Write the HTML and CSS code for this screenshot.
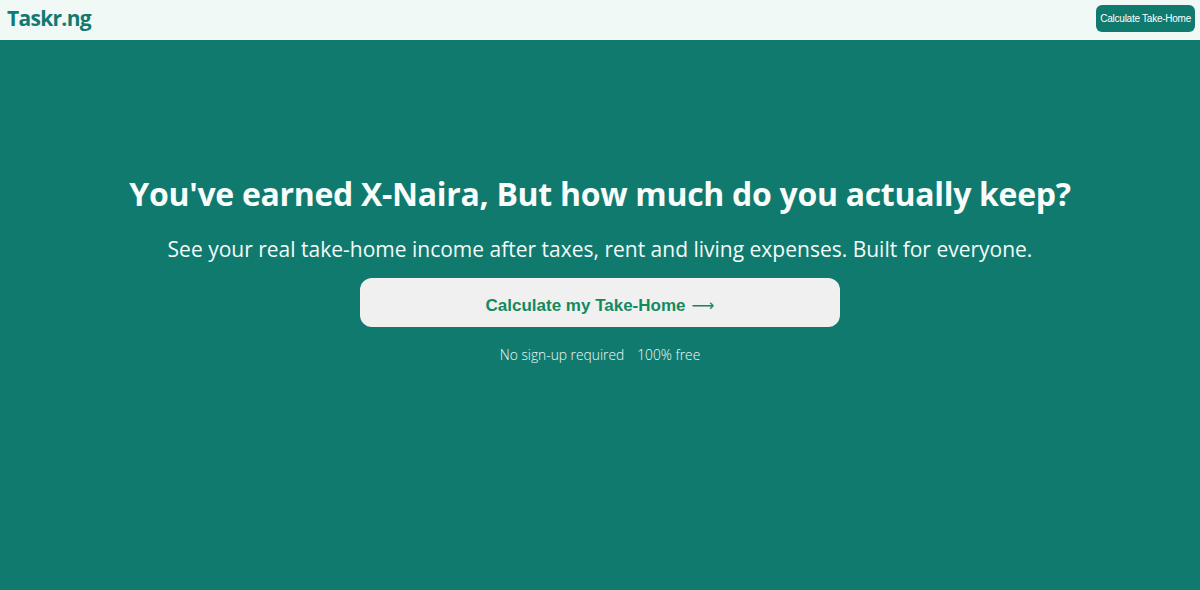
FILE: index.html
```html
<!DOCTYPE html>
<html lang="en">
<head>
<meta charset="utf-8">
<title>Taskr.ng</title>
<link rel="stylesheet" href="styles.css">
</head>
<body>
<header class="topbar">
  <a class="logo" href="#">Taskr.ng</a>
  <a class="nav-cta" href="#">Calculate Take-Home</a>
</header>
<main class="hero">
  <h1 class="hero-title">You've earned X-Naira, But how much do you actually keep?</h1>
  <p class="hero-sub">See your real take-home income after taxes, rent and living expenses. Built for everyone.</p>
  <a class="hero-cta" href="#">Calculate my Take-Home <span class="arrow">⟶</span></a>
  <p class="hero-note"><span>No sign-up required</span><span>100% free</span></p>
</main>
</body>
</html>
```
FILE: styles.css
```css
* { box-sizing: border-box; }
html, body { margin: 0; height: 100%; }
body {
  font-family: "Open Sans", "Noto Sans", sans-serif;
  background: #117a6f;
  display: flex;
  flex-direction: column;
}
a { text-decoration: none; }
.topbar {
  height: 40px;
  background: #f1f9f7;
  display: flex;
  align-items: center;
  justify-content: space-between;
  padding: 0 5px 4px 7px;
  flex-shrink: 0;
}
.logo {
  color: #127a6f;
  font-weight: 700;
  font-size: 21px;
  letter-spacing: -0.7px;
}
.nav-cta {
  background: #117a6f;
  color: #fff;
  font-family: "Liberation Sans", Arial, sans-serif;
  font-size: 10px;
  letter-spacing: -0.25px;
  padding: 7px 4px;
  border-radius: 6px;
  line-height: 13px;
}
.hero {
  flex: 1;
  display: flex;
  flex-direction: column;
  align-items: center;
  padding-top: 130px;
  color: #fff;
}
.hero-title {
  margin: 0;
  font-size: 32px;
  font-weight: 700;
  letter-spacing: -0.3px;
  line-height: 48px;
  color: #f8fcfb;
}
.hero-sub {
  margin: 16px 0 0;
  font-size: 21px;
  line-height: 30px;
  color: #f3faf8;
}
.hero-cta {
  margin-top: 14px;
  width: 480px;
  height: 49px;
  background: #f0f0f0;
  border-radius: 12px;
  display: flex;
  align-items: center;
  justify-content: center;
  gap: 6px;
  font-family: "Liberation Sans", Arial, sans-serif;
  font-weight: 700;
  font-size: 17px;
  color: #138a5e;
  padding-top: 6px;
}
.arrow { font-weight: 400; font-family: "DejaVu Sans", sans-serif; font-size: 16px; }
.hero-note {
  margin: 18px 0 0;
  font-size: 13.8px;
  font-weight: 300;
  color: #f2f9f7;
  display: flex;
  gap: 13px;
}
```
